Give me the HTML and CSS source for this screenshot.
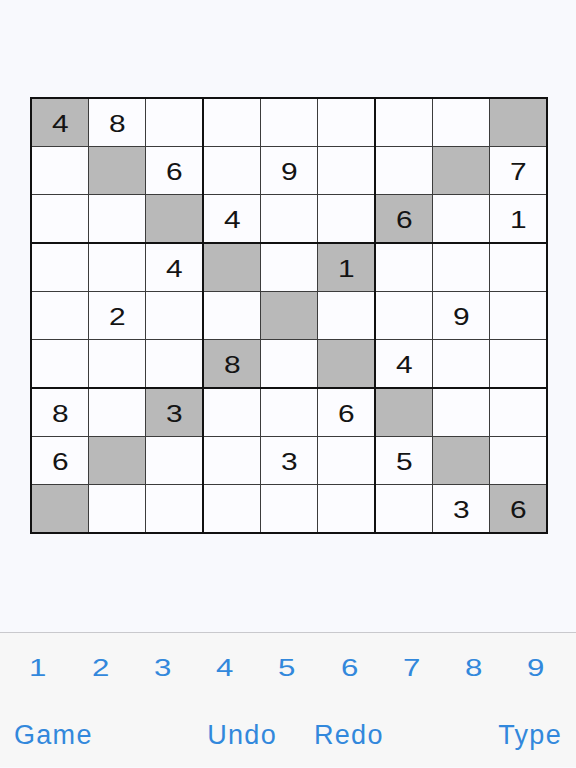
FILE: index.html
```html
<!DOCTYPE html>
<html>
<head>
<meta charset="utf-8">
<link rel="stylesheet" href="styles.css">
</head>
<body>
<div class="main">
  <div class="board">
    <div class="box">
      <div class="cell g"><span>4</span></div><div class="cell"><span>8</span></div><div class="cell"></div>
      <div class="cell"></div><div class="cell g"></div><div class="cell"><span>6</span></div>
      <div class="cell"></div><div class="cell"></div><div class="cell g"></div>
    </div>
    <div class="box">
      <div class="cell"></div><div class="cell"></div><div class="cell"></div>
      <div class="cell"></div><div class="cell"><span>9</span></div><div class="cell"></div>
      <div class="cell"><span>4</span></div><div class="cell"></div><div class="cell"></div>
    </div>
    <div class="box">
      <div class="cell"></div><div class="cell"></div><div class="cell g"></div>
      <div class="cell"></div><div class="cell g"></div><div class="cell"><span>7</span></div>
      <div class="cell g"><span>6</span></div><div class="cell"></div><div class="cell"><span>1</span></div>
    </div>
    <div class="box">
      <div class="cell"></div><div class="cell"></div><div class="cell"><span>4</span></div>
      <div class="cell"></div><div class="cell"><span>2</span></div><div class="cell"></div>
      <div class="cell"></div><div class="cell"></div><div class="cell"></div>
    </div>
    <div class="box">
      <div class="cell g"></div><div class="cell"></div><div class="cell g"><span>1</span></div>
      <div class="cell"></div><div class="cell g"></div><div class="cell"></div>
      <div class="cell g"><span>8</span></div><div class="cell"></div><div class="cell g"></div>
    </div>
    <div class="box">
      <div class="cell"></div><div class="cell"></div><div class="cell"></div>
      <div class="cell"></div><div class="cell"><span>9</span></div><div class="cell"></div>
      <div class="cell"><span>4</span></div><div class="cell"></div><div class="cell"></div>
    </div>
    <div class="box">
      <div class="cell"><span>8</span></div><div class="cell"></div><div class="cell g"><span>3</span></div>
      <div class="cell"><span>6</span></div><div class="cell g"></div><div class="cell"></div>
      <div class="cell g"></div><div class="cell"></div><div class="cell"></div>
    </div>
    <div class="box">
      <div class="cell"></div><div class="cell"></div><div class="cell"><span>6</span></div>
      <div class="cell"></div><div class="cell"><span>3</span></div><div class="cell"></div>
      <div class="cell"></div><div class="cell"></div><div class="cell"></div>
    </div>
    <div class="box">
      <div class="cell g"></div><div class="cell"></div><div class="cell"></div>
      <div class="cell"><span>5</span></div><div class="cell g"></div><div class="cell"></div>
      <div class="cell"></div><div class="cell"><span>3</span></div><div class="cell g"><span>6</span></div>
    </div>
  </div>
</div>
<div class="toolbar">
  <div class="digits">
    <div class="digit"><span>1</span></div>
    <div class="digit"><span>2</span></div>
    <div class="digit"><span>3</span></div>
    <div class="digit"><span>4</span></div>
    <div class="digit"><span>5</span></div>
    <div class="digit"><span>6</span></div>
    <div class="digit"><span>7</span></div>
    <div class="digit"><span>8</span></div>
    <div class="digit"><span>9</span></div>
  </div>
  <div class="actions">
    <div class="action">Game</div>
    <div class="action undo">Undo</div>
    <div class="action redo">Redo</div>
    <div class="action type">Type</div>
  </div>
</div>
</body>
</html>
```
FILE: styles.css
```css
html, body {
  margin: 0;
  padding: 0;
}
body {
  width: 576px;
  height: 768px;
  background: #f8f9fd;
  font-family: "Liberation Sans", Arial, sans-serif;
  overflow: hidden;
}
.main {
  height: 633px;
  padding: 97px 0 0 30px;
  box-sizing: border-box;
  border-bottom: 1px solid #c9c9cd;
}
.board {
  display: inline-grid;
  grid-template-columns: repeat(3, auto);
  gap: 2px;
  border: 2px solid #111;
  background: #111;
}
.box {
  display: grid;
  grid-template-columns: repeat(3, 56px);
  grid-template-rows: repeat(3, 47px);
  gap: 1px;
  background: #3c3c3c;
}
.cell {
  background: #fcfcff;
  display: flex;
  align-items: center;
  justify-content: center;
  box-sizing: border-box;
  padding-top: 4px;
  font-size: 23px;
  color: #141414;
}
.cell span {
  display: inline-block;
  transform: scaleX(1.3);
  line-height: 1;
}
.cell.g {
  background: #b9b9b9;
}
.toolbar {
  height: 134px;
  background: #f7f7f7;
  color: #3288dc;
}
.digits {
  display: flex;
  height: 68px;
  padding: 1px 9px 0 7px;
  box-sizing: border-box;
  align-items: center;
}
.digit {
  flex: 1;
  text-align: center;
  font-size: 24px;
}
.digit span {
  display: inline-block;
  transform: scaleX(1.3);
}
.actions {
  display: flex;
  height: 66px;
  box-sizing: border-box;
  padding: 3px 14px 0;
  align-items: center;
  font-size: 27px;
}
.action {
  letter-spacing: 1.3px;
}
.undo {
  margin-left: auto;
}
.redo {
  margin-left: 37px;
}
.type {
  margin-left: auto;
}
```
